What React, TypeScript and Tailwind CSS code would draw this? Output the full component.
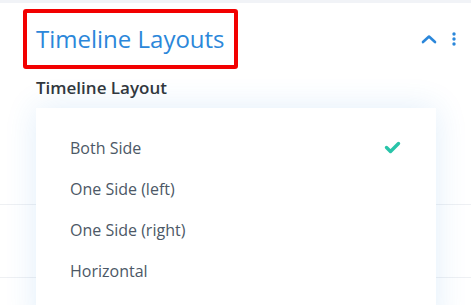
import React from "react";

const options = ["Both Side", "One Side (left)", "One Side (right)", "Horizontal"];

export default function App() {
  return (
    <div
      className="relative h-[305px] w-[471px] overflow-hidden bg-white"
      style={{ fontFamily: '"Open Sans", "Liberation Sans", sans-serif' }}
    >
      <div className="h-[3px] bg-[#f1f3f7]" />

      {/* header */}
      <div className="flex items-center justify-between pl-[23px] pr-[14px] pt-[6px]">
        <div className="rounded-[3px] border-4 border-[#f20000] px-[9px] h-[60px] w-[215px] flex items-center">
          <h2 className="text-[24px] leading-[30px] text-[#2b87da] font-normal whitespace-nowrap">
            Timeline Layouts
          </h2>
        </div>
        <div className="flex items-center gap-[14px] text-[#2b87da]">
          <svg width="16" height="10" viewBox="0 0 16 10" fill="none">
            <path d="M2 8 L8 2.5 L14 8" stroke="currentColor" strokeWidth="2.6" strokeLinecap="round" strokeLinejoin="round" />
          </svg>
          <svg width="6" height="14" viewBox="0 0 6 14">
            <circle cx="3" cy="2" r="1.7" fill="currentColor" />
            <circle cx="3" cy="7" r="1.7" fill="currentColor" />
            <circle cx="3" cy="12" r="1.7" fill="currentColor" />
          </svg>
        </div>
      </div>

      <div className="pl-[36px] pt-[8px] text-[17px] leading-[22px] font-semibold text-[#32373c]">
        Timeline Layout
      </div>

      {/* rows behind the menu */}
      <div className="mt-[105px] border-b border-[#eef0f3] h-[1px]" />
      <div className="mt-[72px] border-b border-[#eef0f3] h-[1px]" />

      {/* open select menu */}
      <div className="absolute left-[36px] top-[108px] w-[400px] h-[220px] bg-white shadow-[0_0_30px_rgba(43,135,218,0.14)]">
        <ul className="pt-[19px]">
          {options.map((o, i) => (
            <li
              key={o}
              className="flex items-center justify-between h-[41px] pl-[34px] pr-[35px] text-[16px] font-medium text-[#4c5866]"
            >
              <span>{o}</span>
              {i === 0 && (
                <svg width="17" height="13" viewBox="0 0 17 13" fill="none">
                  <path d="M2.5 6.5 L6.5 10.5 L14.5 2.5" stroke="#29c4a9" strokeWidth="3.4" strokeLinecap="round" strokeLinejoin="round" />
                </svg>
              )}
            </li>
          ))}
        </ul>
      </div>
    </div>
  );
}
